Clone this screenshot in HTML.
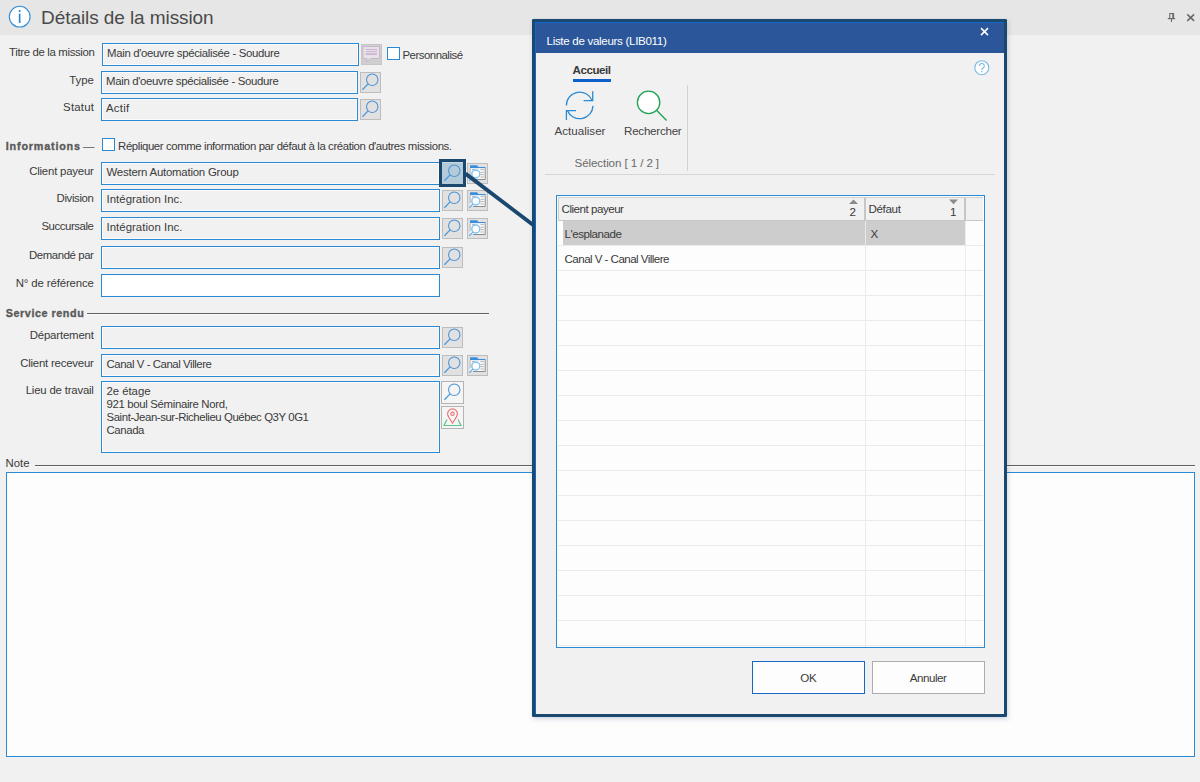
<!DOCTYPE html>
<html><head><meta charset="utf-8"><title>Détails de la mission</title>
<style>
html,body{margin:0;padding:0}
body{width:1200px;height:782px;background:#f1f1f1;position:relative;overflow:hidden;font-family:"Liberation Sans", sans-serif}
#r>div,#r>svg,#r>div>div{position:absolute;display:block}
#r>div{box-sizing:content-box}
.t{position:absolute;white-space:pre;line-height:1;display:block}
</style></head><body><div id="r">
<div style="left:0px;top:0px;width:1200px;height:35px;background:#e6e6e6"></div>
<svg style="left:7px;top:4px" width="25" height="25" viewBox="0 0 25 25"><circle cx="12.7" cy="12.65" r="10.35" fill="#fff" stroke="#3391d8" stroke-width="1.15"/><rect x="11.85" y="9.6" width="1.6" height="9.4" fill="#2485d3"/><rect x="11.85" y="6" width="1.6" height="2" fill="#2485d3"/></svg>
<svg style="left:1166px;top:12px" width="12" height="12" viewBox="0 0 12 12"><path d="M3.2 1.5h4.8M3.8 1.5v5M5.5 6.6v3.3" stroke="#6a6a6a" stroke-width="1.1" fill="none"/><path d="M7.2 1.5v5" stroke="#6a6a6a" stroke-width="1.9" fill="none"/><path d="M1.8 6.6h7.4" stroke="#6a6a6a" stroke-width="1.2" fill="none"/></svg>
<svg style="left:1186px;top:13px" width="10" height="10" viewBox="0 0 10 10"><path d="M1.3 1.4l6.8 6.5M8.1 1.4l-6.8 6.5" stroke="#6a6a6a" stroke-width="1.6" fill="none"/></svg>
<div style="left:102px;top:43px;width:255px;height:21px;border:1px solid #2b8ad2;background:#f1f1f1;box-shadow:inset 0 0 0 1px #fbfbfb"></div>
<div style="left:361px;top:44px;width:19px;height:19px;border:1px solid #c6c6c6;background:#cfcfcf"><div style="left:-1px;top:-1px;width:21px;height:21px"><svg width="21" height="21" viewBox="0 0 21 21"><path d="M2 2.5h16.5v12H9.6L5.3 18l.7-3.5H2z" fill="#e4e4e4" stroke="#cdb2d4" stroke-width="1"/><path d="M4.8 5.5h11.2M4.8 7.6h11.2" stroke="#cfaed6" stroke-width="1"/><path d="M4.8 10.1h11.2" stroke="#cfaed6" stroke-width="1.7"/></svg></div></div>
<div style="left:387px;top:47px;width:11px;height:11px;border:1px solid #2b8ad2;background:#fff"></div>
<div style="left:101px;top:71px;width:255px;height:21px;border:1px solid #2b8ad2;background:#f1f1f1;box-shadow:inset 0 0 0 1px #fbfbfb"></div>
<div style="left:360px;top:72px;width:19px;height:19px;border:1px solid #bdbdbd;background:#e1e1e1"><div style="left:-1px;top:-1px;width:21px;height:21px"><svg width="21" height="21" viewBox="0 0 21 21"><circle cx="12.25" cy="7.75" r="5.7" fill="none" stroke="#4f95d6" stroke-width="1.1"/><path d="M8.1 11.9 L2.4 17.7" stroke="#4f95d6" stroke-width="1.3" fill="none"/></svg></div></div>
<div style="left:101px;top:98px;width:255px;height:21px;border:1px solid #2b8ad2;background:#f1f1f1;box-shadow:inset 0 0 0 1px #fbfbfb"></div>
<div style="left:360px;top:99px;width:19px;height:19px;border:1px solid #bdbdbd;background:#e1e1e1"><div style="left:-1px;top:-1px;width:21px;height:21px"><svg width="21" height="21" viewBox="0 0 21 21"><circle cx="12.25" cy="7.75" r="5.7" fill="none" stroke="#4f95d6" stroke-width="1.1"/><path d="M8.1 11.9 L2.4 17.7" stroke="#4f95d6" stroke-width="1.3" fill="none"/></svg></div></div>
<div style="left:102px;top:138px;width:11px;height:11px;border:1px solid #2b8ad2;background:#fff"></div>
<div style="left:101px;top:162px;width:337px;height:21px;border:1px solid #2b8ad2;background:#f1f1f1;box-shadow:inset 0 0 0 1px #fbfbfb"></div>
<div style="left:467px;top:163px;width:19px;height:19px;border:1px solid #bdbdbd;background:#e1e1e1"><div style="left:-1px;top:-1px;width:21px;height:21px"><svg width="21" height="21" viewBox="0 0 21 21"><path d="M3 2.2h7.2l1.2 1.9h7.1v1.2H3z" fill="#3b8edb"/><rect x="3" y="5.3" width="15.5" height="11" fill="#fafafa"/><path d="M18.2 5.3v11.2H6" stroke="#8c8c8c" stroke-width="1" fill="none"/><path d="M3.2 5.3v8" stroke="#a8a8a8" stroke-width=".8" fill="none"/><path d="M13.5 6.6h3.4M13.5 9.3h3.4M13.5 11.6h3.4M13.5 14h3.4M5 6.6h3" stroke="#b4b4b4" stroke-width="1"/><circle cx="8.8" cy="11" r="4" fill="#ffffff" stroke="#86c3f0" stroke-width="1.5"/><path d="M5.8 14.2 L2.3 17.8" stroke="#5aa9ea" stroke-width="1.2"/></svg></div></div>
<div style="left:101px;top:189px;width:337px;height:21px;border:1px solid #2b8ad2;background:#f1f1f1;box-shadow:inset 0 0 0 1px #fbfbfb"></div>
<div style="left:442px;top:190px;width:19px;height:19px;border:1px solid #bdbdbd;background:#e1e1e1"><div style="left:-1px;top:-1px;width:21px;height:21px"><svg width="21" height="21" viewBox="0 0 21 21"><circle cx="12.25" cy="7.75" r="5.7" fill="none" stroke="#4f95d6" stroke-width="1.1"/><path d="M8.1 11.9 L2.4 17.7" stroke="#4f95d6" stroke-width="1.3" fill="none"/></svg></div></div>
<div style="left:467px;top:190px;width:19px;height:19px;border:1px solid #bdbdbd;background:#e1e1e1"><div style="left:-1px;top:-1px;width:21px;height:21px"><svg width="21" height="21" viewBox="0 0 21 21"><path d="M3 2.2h7.2l1.2 1.9h7.1v1.2H3z" fill="#3b8edb"/><rect x="3" y="5.3" width="15.5" height="11" fill="#fafafa"/><path d="M18.2 5.3v11.2H6" stroke="#8c8c8c" stroke-width="1" fill="none"/><path d="M3.2 5.3v8" stroke="#a8a8a8" stroke-width=".8" fill="none"/><path d="M13.5 6.6h3.4M13.5 9.3h3.4M13.5 11.6h3.4M13.5 14h3.4M5 6.6h3" stroke="#b4b4b4" stroke-width="1"/><circle cx="8.8" cy="11" r="4" fill="#ffffff" stroke="#86c3f0" stroke-width="1.5"/><path d="M5.8 14.2 L2.3 17.8" stroke="#5aa9ea" stroke-width="1.2"/></svg></div></div>
<div style="left:101px;top:217px;width:337px;height:21px;border:1px solid #2b8ad2;background:#f1f1f1;box-shadow:inset 0 0 0 1px #fbfbfb"></div>
<div style="left:442px;top:218px;width:19px;height:19px;border:1px solid #bdbdbd;background:#e1e1e1"><div style="left:-1px;top:-1px;width:21px;height:21px"><svg width="21" height="21" viewBox="0 0 21 21"><circle cx="12.25" cy="7.75" r="5.7" fill="none" stroke="#4f95d6" stroke-width="1.1"/><path d="M8.1 11.9 L2.4 17.7" stroke="#4f95d6" stroke-width="1.3" fill="none"/></svg></div></div>
<div style="left:467px;top:218px;width:19px;height:19px;border:1px solid #bdbdbd;background:#e1e1e1"><div style="left:-1px;top:-1px;width:21px;height:21px"><svg width="21" height="21" viewBox="0 0 21 21"><path d="M3 2.2h7.2l1.2 1.9h7.1v1.2H3z" fill="#3b8edb"/><rect x="3" y="5.3" width="15.5" height="11" fill="#fafafa"/><path d="M18.2 5.3v11.2H6" stroke="#8c8c8c" stroke-width="1" fill="none"/><path d="M3.2 5.3v8" stroke="#a8a8a8" stroke-width=".8" fill="none"/><path d="M13.5 6.6h3.4M13.5 9.3h3.4M13.5 11.6h3.4M13.5 14h3.4M5 6.6h3" stroke="#b4b4b4" stroke-width="1"/><circle cx="8.8" cy="11" r="4" fill="#ffffff" stroke="#86c3f0" stroke-width="1.5"/><path d="M5.8 14.2 L2.3 17.8" stroke="#5aa9ea" stroke-width="1.2"/></svg></div></div>
<div style="left:101px;top:246px;width:337px;height:21px;border:1px solid #2b8ad2;background:#f1f1f1;box-shadow:inset 0 0 0 1px #fbfbfb"></div>
<div style="left:442px;top:247px;width:19px;height:19px;border:1px solid #bdbdbd;background:#e1e1e1"><div style="left:-1px;top:-1px;width:21px;height:21px"><svg width="21" height="21" viewBox="0 0 21 21"><circle cx="12.25" cy="7.75" r="5.7" fill="none" stroke="#4f95d6" stroke-width="1.1"/><path d="M8.1 11.9 L2.4 17.7" stroke="#4f95d6" stroke-width="1.3" fill="none"/></svg></div></div>
<div style="left:101px;top:274px;width:337px;height:21px;border:1px solid #2b8ad2;background:#ffffff;box-shadow:inset 0 0 0 1px #fbfbfb"></div>
<div style="left:87px;top:313px;width:402px;height:1px;background:#5f5f5f"></div>
<div style="left:87px;top:314px;width:402px;height:1px;background:#fafafa"></div>
<div style="left:101px;top:326px;width:337px;height:21px;border:1px solid #2b8ad2;background:#f1f1f1;box-shadow:inset 0 0 0 1px #fbfbfb"></div>
<div style="left:442px;top:327px;width:19px;height:19px;border:1px solid #bdbdbd;background:#e1e1e1"><div style="left:-1px;top:-1px;width:21px;height:21px"><svg width="21" height="21" viewBox="0 0 21 21"><circle cx="12.25" cy="7.75" r="5.7" fill="none" stroke="#4f95d6" stroke-width="1.1"/><path d="M8.1 11.9 L2.4 17.7" stroke="#4f95d6" stroke-width="1.3" fill="none"/></svg></div></div>
<div style="left:101px;top:354px;width:337px;height:21px;border:1px solid #2b8ad2;background:#f1f1f1;box-shadow:inset 0 0 0 1px #fbfbfb"></div>
<div style="left:442px;top:355px;width:19px;height:19px;border:1px solid #bdbdbd;background:#e1e1e1"><div style="left:-1px;top:-1px;width:21px;height:21px"><svg width="21" height="21" viewBox="0 0 21 21"><circle cx="12.25" cy="7.75" r="5.7" fill="none" stroke="#4f95d6" stroke-width="1.1"/><path d="M8.1 11.9 L2.4 17.7" stroke="#4f95d6" stroke-width="1.3" fill="none"/></svg></div></div>
<div style="left:467px;top:355px;width:19px;height:19px;border:1px solid #bdbdbd;background:#e1e1e1"><div style="left:-1px;top:-1px;width:21px;height:21px"><svg width="21" height="21" viewBox="0 0 21 21"><path d="M3 2.2h7.2l1.2 1.9h7.1v1.2H3z" fill="#3b8edb"/><rect x="3" y="5.3" width="15.5" height="11" fill="#fafafa"/><path d="M18.2 5.3v11.2H6" stroke="#8c8c8c" stroke-width="1" fill="none"/><path d="M3.2 5.3v8" stroke="#a8a8a8" stroke-width=".8" fill="none"/><path d="M13.5 6.6h3.4M13.5 9.3h3.4M13.5 11.6h3.4M13.5 14h3.4M5 6.6h3" stroke="#b4b4b4" stroke-width="1"/><circle cx="8.8" cy="11" r="4" fill="#ffffff" stroke="#86c3f0" stroke-width="1.5"/><path d="M5.8 14.2 L2.3 17.8" stroke="#5aa9ea" stroke-width="1.2"/></svg></div></div>
<div style="left:101px;top:381px;width:337px;height:70px;border:1px solid #2b8ad2;background:#f1f1f1;box-shadow:inset 0 0 0 1px #fbfbfb"></div>
<div style="left:441px;top:381px;width:21px;height:21px;border:1px solid #b4b4b4;background:#f5f5f5"><div style="left:0px;top:0px;width:21px;height:21px"><svg width="21" height="21" viewBox="0 0 21 21"><circle cx="12.25" cy="7.75" r="5.7" fill="none" stroke="#4f95d6" stroke-width="1.1"/><path d="M8.1 11.9 L2.4 17.7" stroke="#4f95d6" stroke-width="1.3" fill="none"/></svg></div></div>
<div style="left:441px;top:406px;width:21px;height:21px;border:1px solid #b4b4b4;background:#f5f5f5"><div style="left:0px;top:0px;width:21px;height:21px"><svg width="21" height="21" viewBox="0 0 21 21"><path d="M5 12.5 L2 18.5 H19 L16 12.5" fill="none" stroke="#5fc58c" stroke-width="1.2"/><path d="M10.5 16 C8 12 5.6 9.6 5.6 6.8 a4.9 4.9 0 0 1 9.8 0 C15.4 9.6 13 12 10.5 16z" fill="#f7f7f7" stroke="#ea7575" stroke-width="1.2"/><circle cx="10.5" cy="6.8" r="1.7" fill="none" stroke="#ea7575" stroke-width="1.1"/></svg></div></div>
<div style="left:35px;top:465px;width:1160px;height:1px;background:#5f5f5f"></div>
<div style="left:35px;top:466px;width:1160px;height:1px;background:#fafafa"></div>
<div style="left:6px;top:472px;width:1187px;height:283px;border:1px solid #2b8ad2;background:#fdfdfd"></div>
<div style="left:439px;top:159px;width:21px;height:21.5px;border:3px solid #1a486f;background:#b3cbd8"><div style="left:0;top:0;width:21px;height:1px;background:#c6d9e1"></div><div style="left:0;top:1px;width:21px;height:21px"><svg width="21" height="21" viewBox="0 0 21 21"><circle cx="12.25" cy="7.75" r="5.7" fill="none" stroke="#4f95d6" stroke-width="1.1"/><path d="M8.1 11.9 L2.4 17.7" stroke="#4f95d6" stroke-width="1.3" fill="none"/></svg></div></div>
<svg style="left:460px;top:165px" width="80" height="70" viewBox="460 165 80 70"><path d="M465.5 173.6 L534.5 226" stroke="#1a486f" stroke-width="3.9" fill="none"/></svg>
<div style="left:532px;top:19px;width:475px;height:698px;background:#1a486f;border-radius:1.2px;box-shadow:1px 2px 5px rgba(40,70,120,.22)"></div>
<div style="left:535px;top:22px;width:469px;height:692px;background:#f1f1f1"></div>
<div style="left:535px;top:22px;width:469px;height:31px;background:#2b579a;border-top:1px solid #1466c8;height:30px"></div>
<div style="left:535px;top:22px;width:1px;height:692px;background:#1466c8"></div>
<svg style="left:979px;top:26px" width="11" height="11" viewBox="0 0 11 11"><path d="M2 2.1l7 7M9 2.1l-7 7" stroke="#fff" stroke-width="1.5" fill="none"/></svg>
<svg style="left:973px;top:59px" width="18" height="18" viewBox="0 0 18 18"><circle cx="8.8" cy="8.7" r="7" fill="#fff" stroke="#7bbbe6" stroke-width="1.1"/><path d="M6.5 6.9a2.4 2.4 0 1 1 3.6 2.1c-.9.5-1.3.9-1.3 2" fill="none" stroke="#7bbbe6" stroke-width="1.1"/><rect x="8.2" y="12" width="1.2" height="1.3" fill="#7bbbe6"/></svg>
<div style="left:573px;top:79px;width:38px;height:3px;background:#0f5fcb"></div>
<svg style="left:560px;top:86px" width="40" height="40" viewBox="560 86 40 40"><g fill="none" stroke="#2b8ad2" stroke-width="1.3"><path d="M566.40 105.40 A13.3 13.3 0 0 1 592.12 100.63"/><path d="M592.7 91.2 V100.7 H583.6"/><path d="M592.99 105.86 A13.3 13.3 0 0 1 567.28 110.17"/><path d="M566.4 120 V110.6 H576"/></g></svg>
<svg style="left:630px;top:86px" width="42" height="40" viewBox="630 86 42 40"><circle cx="648.6" cy="102.4" r="11.2" fill="#fff" stroke="#21a355" stroke-width="1.3"/><path d="M656.8 110.6 L666.6 120.4" stroke="#21a355" stroke-width="1.4" fill="none"/></svg>
<div style="left:687px;top:85px;width:1px;height:86px;background:#d2d2d2"></div>
<div style="left:545px;top:174px;width:450px;height:1px;background:#d6d6d6"></div>
<div style="left:556px;top:195px;width:427px;height:451px;border:1px solid #2b8ad2;background:#fdfdfd"></div>
<div style="left:558px;top:197px;width:425px;height:24px;background:#f1f1f1;border-top:1px solid #d0d0d0;border-bottom:1px solid #c8c8c8;box-sizing:border-box"></div>
<div style="left:558px;top:197px;width:1px;height:24px;background:#cfcfcf"></div>
<div style="left:864px;top:198px;width:2px;height:22px;background:#c6c6c6"></div>
<div style="left:964px;top:198px;width:2px;height:22px;background:#c6c6c6"></div>
<div style="left:563px;top:221px;width:402px;height:24px;background:#cdcdcd"></div>
<div style="left:558px;top:245px;width:425px;height:1px;background:#ebebeb"></div>
<div style="left:558px;top:270px;width:425px;height:1px;background:#ebebeb"></div>
<div style="left:558px;top:295px;width:425px;height:1px;background:#ebebeb"></div>
<div style="left:558px;top:320px;width:425px;height:1px;background:#ebebeb"></div>
<div style="left:558px;top:345px;width:425px;height:1px;background:#ebebeb"></div>
<div style="left:558px;top:370px;width:425px;height:1px;background:#ebebeb"></div>
<div style="left:558px;top:395px;width:425px;height:1px;background:#ebebeb"></div>
<div style="left:558px;top:420px;width:425px;height:1px;background:#ebebeb"></div>
<div style="left:558px;top:445px;width:425px;height:1px;background:#ebebeb"></div>
<div style="left:558px;top:470px;width:425px;height:1px;background:#ebebeb"></div>
<div style="left:558px;top:495px;width:425px;height:1px;background:#ebebeb"></div>
<div style="left:558px;top:520px;width:425px;height:1px;background:#ebebeb"></div>
<div style="left:558px;top:545px;width:425px;height:1px;background:#ebebeb"></div>
<div style="left:558px;top:570px;width:425px;height:1px;background:#ebebeb"></div>
<div style="left:558px;top:595px;width:425px;height:1px;background:#ebebeb"></div>
<div style="left:558px;top:620px;width:425px;height:1px;background:#ebebeb"></div>
<div style="left:558px;top:645px;width:425px;height:1px;background:#ebebeb"></div>
<div style="left:865px;top:221px;width:1px;height:426px;background:#e9e9e9"></div>
<div style="left:965px;top:221px;width:1px;height:426px;background:#ececec"></div>
<svg style="left:848px;top:199px" width="11" height="6" viewBox="0 0 11 6"><path d="M5.5 0.4 L10 5 H1z" fill="#8a8a8a"/></svg>
<svg style="left:948px;top:199px" width="11" height="6" viewBox="0 0 11 6"><path d="M1 0.6 H10 L5.5 5.2z" fill="#8a8a8a"/></svg>
<div style="left:752px;top:661px;width:111px;height:31px;border:1px solid #1a66c4;background:#fdfdfd"></div>
<div style="left:872px;top:661px;width:111px;height:31px;border:1px solid #adadad;background:#fdfdfd"></div>
<span class="t" style="left:41.10px;top:8px;font-size:19px;color:#4a4a4a;letter-spacing:-0.083px">Détails de la mission</span>
<span class="t" style="left:9.06px;top:47px;font-size:11.4px;color:#3a3a3a;letter-spacing:-0.342px">Titre de la mission</span>
<span class="t" style="left:69.35px;top:75px;font-size:11.4px;color:#3a3a3a;letter-spacing:-0.051px">Type</span>
<span class="t" style="left:63.11px;top:102px;font-size:11.4px;color:#3a3a3a;letter-spacing:0.206px">Statut</span>
<span class="t" style="left:29.20px;top:166px;font-size:11.4px;color:#3a3a3a;letter-spacing:-0.202px">Client payeur</span>
<span class="t" style="left:56.54px;top:193px;font-size:11.4px;color:#3a3a3a;letter-spacing:-0.361px">Division</span>
<span class="t" style="left:41.46px;top:221px;font-size:11.4px;color:#3a3a3a;letter-spacing:-0.436px">Succursale</span>
<span class="t" style="left:28.99px;top:250px;font-size:11.4px;color:#3a3a3a;letter-spacing:-0.412px">Demandé par</span>
<span class="t" style="left:15.77px;top:278px;font-size:11.4px;color:#3a3a3a;letter-spacing:-0.127px">N° de référence</span>
<span class="t" style="left:29.73px;top:330px;font-size:11.4px;color:#3a3a3a;letter-spacing:-0.169px">Département</span>
<span class="t" style="left:20.19px;top:358px;font-size:11.4px;color:#3a3a3a;letter-spacing:-0.207px">Client receveur</span>
<span class="t" style="left:25.71px;top:385px;font-size:11.4px;color:#3a3a3a;letter-spacing:-0.195px">Lieu de travail</span>
<span class="t" style="left:5.80px;top:141px;font-size:10.8px;font-weight:700;-webkit-text-stroke:.35px #5a5a5a;color:#5a5a5a;letter-spacing:0.801px">Informations</span>
<span class="t" style="left:83.00px;top:141px;font-size:11.4px;color:#5a5a5a;letter-spacing:0.000px">—</span>
<span class="t" style="left:5.80px;top:308px;font-size:10.8px;font-weight:700;-webkit-text-stroke:.35px #5a5a5a;color:#5a5a5a;letter-spacing:0.544px">Service rendu</span>
<span class="t" style="left:5.50px;top:458px;font-size:11.4px;color:#3a3a3a;letter-spacing:-0.016px">Note</span>
<span class="t" style="left:402.50px;top:50px;font-size:11.4px;color:#3a3a3a;letter-spacing:-0.488px">Personnalisé</span>
<span class="t" style="left:118.10px;top:141px;font-size:11.4px;color:#3a3a3a;letter-spacing:-0.407px">Répliquer comme information par défaut à la création d&#x27;autres missions.</span>
<span class="t" style="left:107.00px;top:48px;font-size:11.4px;color:#3a3a3a;letter-spacing:-0.326px">Main d&#x27;oeuvre spécialisée - Soudure</span>
<span class="t" style="left:106.00px;top:76px;font-size:11.4px;color:#3a3a3a;letter-spacing:-0.326px">Main d&#x27;oeuvre spécialisée - Soudure</span>
<span class="t" style="left:106.00px;top:103px;font-size:11.4px;color:#3a3a3a;letter-spacing:0.269px">Actif</span>
<span class="t" style="left:106.50px;top:167px;font-size:11.4px;color:#3a3a3a;letter-spacing:-0.216px">Western Automation Group</span>
<span class="t" style="left:106.50px;top:194px;font-size:11.4px;color:#3a3a3a;letter-spacing:0.040px">Intégration Inc.</span>
<span class="t" style="left:106.50px;top:222px;font-size:11.4px;color:#3a3a3a;letter-spacing:0.040px">Intégration Inc.</span>
<span class="t" style="left:106.50px;top:359px;font-size:11.4px;color:#3a3a3a;letter-spacing:-0.436px">Canal V - Canal Villere</span>
<span class="t" style="left:106.50px;top:386px;font-size:11.4px;color:#3a3a3a;letter-spacing:-0.043px">2e étage</span>
<span class="t" style="left:106.50px;top:399px;font-size:11.4px;color:#3a3a3a;letter-spacing:-0.340px">921 boul Séminaire Nord,</span>
<span class="t" style="left:106.50px;top:412px;font-size:11.4px;color:#3a3a3a;letter-spacing:-0.416px">Saint-Jean-sur-Richelieu Québec Q3Y 0G1</span>
<span class="t" style="left:106.50px;top:425px;font-size:11.4px;color:#3a3a3a;letter-spacing:-0.401px">Canada</span>
<span class="t" style="left:546.50px;top:35px;font-size:11.6px;color:#ffffff;letter-spacing:-0.321px">Liste de valeurs (LIB011)</span>
<span class="t" style="left:572.50px;top:64px;font-size:11.6px;font-weight:700;color:#3a3a3a;letter-spacing:-0.464px">Accueil</span>
<span class="t" style="left:554.50px;top:125px;font-size:11.6px;color:#444;letter-spacing:0.009px">Actualiser</span>
<span class="t" style="left:624.00px;top:125px;font-size:11.6px;color:#444;letter-spacing:-0.244px">Rechercher</span>
<span class="t" style="left:574.50px;top:157px;font-size:11.6px;color:#6a6a6a;letter-spacing:-0.098px">Sélection [ 1 / 2 ]</span>
<span class="t" style="left:561.50px;top:203px;font-size:11.6px;color:#3a3a3a;letter-spacing:-0.486px">Client payeur</span>
<span class="t" style="left:849.50px;top:206px;font-size:11.6px;color:#3a3a3a;letter-spacing:0.000px">2</span>
<span class="t" style="left:868.50px;top:203px;font-size:11.6px;color:#3a3a3a;letter-spacing:-0.362px">Défaut</span>
<span class="t" style="left:950.00px;top:206px;font-size:11.6px;color:#3a3a3a;letter-spacing:0.000px">1</span>
<span class="t" style="left:564.50px;top:228px;font-size:11.6px;color:#3a3a3a;letter-spacing:-0.470px">L&#x27;esplanade</span>
<span class="t" style="left:870.50px;top:228px;font-size:11.6px;color:#3a3a3a;letter-spacing:0.000px">X</span>
<span class="t" style="left:564.50px;top:253px;font-size:11.6px;color:#3a3a3a;letter-spacing:-0.547px">Canal V - Canal Villere</span>
<span class="t" style="left:800.18px;top:672px;font-size:11.6px;color:#3a3a3a;letter-spacing:-0.133px">OK</span>
<span class="t" style="left:909.72px;top:672px;font-size:11.6px;color:#3a3a3a;letter-spacing:-0.467px">Annuler</span>
</div></body></html>
